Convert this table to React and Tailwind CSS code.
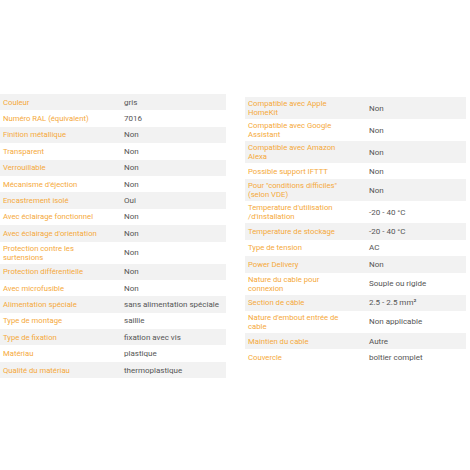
const left = [
  ["Couleur", "gris"],
  ["Numéro RAL (équivalent)", "7016"],
  ["Finition métallique", "Non"],
  ["Transparent", "Non"],
  ["Verrouillable", "Non"],
  ["Mécanisme d'éjection", "Non"],
  ["Encastrement isolé", "Oui"],
  ["Avec éclairage fonctionnel", "Non"],
  ["Avec éclairage d'orientation", "Non"],
  ["Protection contre les surtensions", "Non"],
  ["Protection différentielle", "Non"],
  ["Avec microfusible", "Non"],
  ["Alimentation spéciale", "sans alimentation spéciale"],
  ["Type de montage", "saillie"],
  ["Type de fixation", "fixation avec vis"],
  ["Matériau", "plastique"],
  ["Qualité du matériau", "thermoplastique"],
];

const right = [
  ["Compatible avec Apple HomeKit", "Non"],
  ["Compatible avec Google Assistant", "Non"],
  ["Compatible avec Amazon Alexa", "Non"],
  ["Possible support IFTTT", "Non"],
  ["Pour \"conditions difficiles\" (selon VDE)", "Non"],
  ["Temperature d'utilisation /d'installation", "-20 - 40 °C"],
  ["Temperature de stockage", "-20 - 40 °C"],
  ["Type de tension", "AC"],
  ["Power Delivery", "Non"],
  ["Nature du cable pour connexion", "Souple ou rigide"],
  ["Section de câble", "2.5 - 2.5 mm²"],
  ["Nature d'embout entrée de cable", "Non applicable"],
  ["Maintien du cable", "Autre"],
  ["Couvercle", "boîtier complet"],
];

function SpecTable({ rows, className }) {
  return (
    <div className={`flex flex-col ${className}`}>
      {rows.map(([label, value], i) => (
        <div
          key={label}
          className={`flex min-h-[16.4px] items-center py-[2px] ${i % 2 === 0 ? "bg-[#f2f2f2]" : "bg-white"}`}
        >
          <div className="w-[124px] shrink-0 pl-[3px] pr-[17px] text-[7.7px] leading-[9px] text-[#f5a93a]">{label}</div>
          <div className="text-[8px] leading-[9px] text-[#555555]">{value}</div>
        </div>
      ))}
    </div>
  );
}

export default function App() {
  return (
    <div className="h-[470px] w-[470px] bg-white pt-[94px] font-['Roboto',sans-serif]">
      <div className="flex items-start gap-[19px]">
        <SpecTable rows={left} className="w-[226px]" />
        <SpecTable rows={right} className="mt-[3px] w-[221px]" />
      </div>
    </div>
  );
}
